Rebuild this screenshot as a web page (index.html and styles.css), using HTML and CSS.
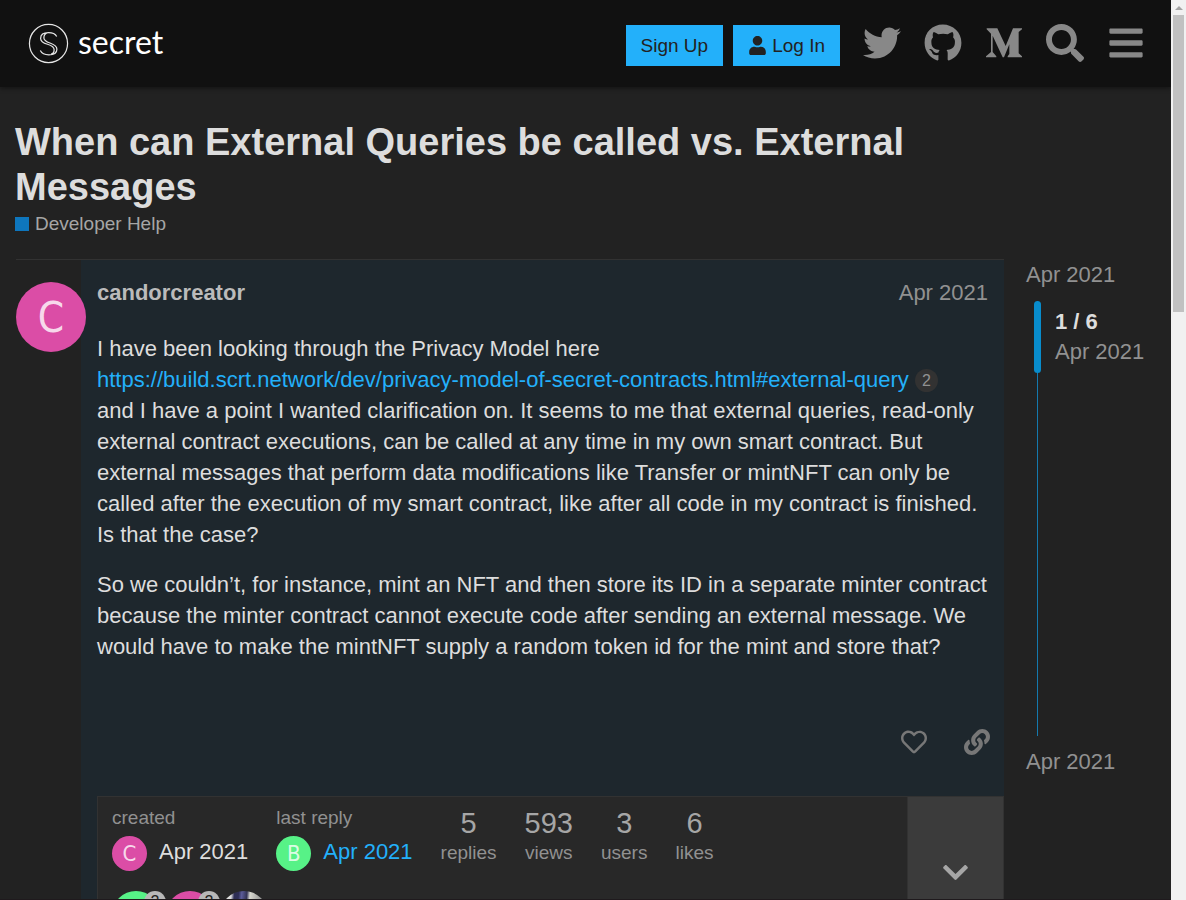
FILE: index.html
```html
<!DOCTYPE html>
<html lang="en">
<head>
<meta charset="utf-8">
<meta name="viewport" content="width=device-width, initial-scale=1">
<title>When can External Queries be called vs. External Messages</title>
<link rel="stylesheet" href="styles.css">
</head>
<body>
<div class="page">
  <header class="site-header">
    <a class="logo" href="#">
      <svg class="logo-mark" viewBox="0 0 40 40" aria-hidden="true">
        <circle cx="20" cy="20" r="18.6"/>
        <path d="M28 13.200C26.500 10.500 23.500 9.500 20 9.500C15.500 9.500 12.300 11.500 12.300 15C12.300 22 25.500 19.500 25.500 26C25.500 28.500 24 30 22.500 30.300M15.500 14.600C15.500 20.500 28.200 18.500 28.200 25.500C28.200 29.500 24.500 31 20.300 31C16.500 31 13.500 29.800 12 26.800M19 9.700C17 10.200 15.500 12.200 15.500 14.600"/>
      </svg>
      <span class="logo-text">secret</span>
    </a>
    <div class="auth">
      <button class="btn" type="button">Sign Up</button>
      <button class="btn" type="button">
        <svg class="btn-icon" viewBox="0 0 448 512" aria-hidden="true"><path d="M224 256c70.7 0 128-57.3 128-128S294.700 0 224 0 96 57.300 96 128s57.300 128 128 128zm89.600 32h-16.700c-22.200 10.200-46.900 16-72.900 16s-50.600-5.800-72.900-16h-16.700C60.200 288 0 348.200 0 422.400V464c0 26.500 21.500 48 48 48h352c26.500 0 48-21.500 48-48v-41.600c0-74.200-60.200-134.400-134.400-134.400z"/></svg>
        <span>Log In</span>
      </button>
    </div>
    <nav class="icons">
      <a href="#" aria-label="Twitter"><svg viewBox="0 0 512 512"><path d="M459.370 151.716c.325 4.548.325 9.097.325 13.645 0 138.720-105.583 298.558-298.558 298.558-59.452 0-114.680-17.219-161.137-47.106 8.447.974 16.568 1.299 25.340 1.299 49.055 0 94.213-16.568 130.274-44.832-46.132-.975-84.792-31.188-98.112-72.772 6.498.974 12.995 1.624 19.818 1.624 9.421 0 18.843-1.300 27.614-3.573-48.081-9.747-84.143-51.980-84.143-102.985v-1.299c13.969 7.797 30.214 12.670 47.431 13.319-28.264-18.843-46.781-51.005-46.781-87.391 0-19.492 5.197-37.360 14.294-52.954 51.655 63.675 129.300 105.258 216.365 109.807-1.624-7.797-2.599-15.918-2.599-24.040 0-57.828 46.782-104.934 104.934-104.934 30.213 0 57.502 12.670 76.670 33.137 23.715-4.548 46.456-13.320 66.599-25.340-7.798 24.366-24.366 44.833-46.132 57.827 21.117-2.273 41.584-8.122 60.426-16.243-14.292 20.791-32.161 39.308-52.628 54.253z"/></svg></a>
      <a href="#" aria-label="GitHub"><svg viewBox="0 0 496 512"><path d="M244.800 8C106.100 8 0 113.300 0 252c0 110.900 69.800 205.800 169.500 239.200 12.800 2.300 17.300-5.600 17.300-12.100 0-6.200-.3-40.400-.3-61.400 0 0-70 15-84.700-29.800 0 0-11.400-29.100-27.800-36.600 0 0-22.900-15.700 1.600-15.400 0 0 24.900 2 38.600 25.800 21.900 38.600 58.600 27.500 72.900 20.900 2.300-16 8.800-27.100 16-33.700-55.900-6.200-112.300-14.300-112.300-110.500 0-27.500 7.600-41.300 23.600-58.900-2.600-6.500-11.100-33.300 2.600-67.900 20.900-6.500 69 27 69 27 20-5.600 41.500-8.500 62.800-8.500s42.800 2.900 62.800 8.500c0 0 48.100-33.600 69-27 13.700 34.700 5.200 61.400 2.600 67.900 16 17.700 25.800 31.500 25.800 58.900 0 96.500-58.900 104.200-114.800 110.500 9.200 7.900 17 22.900 17 46.400 0 33.700-.3 75.400-.3 83.600 0 6.500 4.600 14.400 17.300 12.100C428.200 457.800 496 362.900 496 252 496 113.300 383.500 8 244.800 8z"/></svg></a>
      <a href="#" aria-label="Medium"><svg viewBox="-3 -13 114 114"><path d="M2 0H34L59 53 81 0H108V3L98 11V75L108 84V87H65V84L70 77V48L54 87H50L20 22V71L31 84V87H0V84L15 71V16L2 3Z"/></svg></a>
      <a href="#" aria-label="Search"><svg viewBox="0 0 512 512"><path d="M505 442.700L405.300 343c-4.500-4.500-10.600-7-17-7H372c27.600-35.300 44-79.700 44-128C416 93.100 322.900 0 208 0S0 93.100 0 208s93.100 208 208 208c48.300 0 92.700-16.400 128-44v16.300c0 6.400 2.500 12.500 7 17l99.700 99.700c9.400 9.400 24.600 9.400 33.900 0l28.300-28.300c9.400-9.400 9.400-24.600.1-34zM208 336c-70.700 0-128-57.200-128-128 0-70.700 57.200-128 128-128 70.700 0 128 57.200 128 128 0 70.700-57.200 128-128 128z"/></svg></a>
      <a href="#" aria-label="Menu"><svg viewBox="0 0 448 512"><path d="M16 132h416c8.837 0 16-7.163 16-16V76c0-8.837-7.163-16-16-16H16C7.163 60 0 67.163 0 76v40c0 8.837 7.163 16 16 16zm0 160h416c8.837 0 16-7.163 16-16v-40c0-8.837-7.163-16-16-16H16c-8.837 0-16 7.163-16 16v40c0 8.837 7.163 16 16 16zm0 160h416c8.837 0 16-7.163 16-16v-40c0-8.837-7.163-16-16-16H16c-8.837 0-16 7.163-16 16v40c0 8.837 7.163 16 16 16z"/></svg></a>
    </nav>
  </header>

  <div class="content">
    <div class="topic-title">
      <h1>When can External Queries be called vs. External Messages</h1>
      <a class="category" href="#"><span class="category-box"></span>Developer Help</a>
    </div>

    <div class="columns">
      <main class="post">
        <div class="post-side"><span class="avatar avatar-large pink">C</span></div>
        <article class="post-body">
          <div class="post-meta">
            <a class="username" href="#">candorcreator</a>
            <a class="post-date" href="#">Apr 2021</a>
          </div>
          <div class="cooked">
            <p>I have been looking through the Privacy Model here<br>
            <a href="#">https://build.scrt.network/dev/privacy-model-of-secret-contracts.html#external-query</a> <span class="clicks">2</span><br>
            and I have a point I wanted clarification on. It seems to me that external queries, read-only external contract executions, can be called at any time in my own smart contract. But external messages that perform data modifications like Transfer or mintNFT can only be called after the execution of my smart contract, like after all code in my contract is finished. Is that the case?</p>
            <p>So we couldn’t, for instance, mint an NFT and then store its ID in a separate minter contract because the minter contract cannot execute code after sending an external message. We would have to make the mintNFT supply a random token id for the mint and store that?</p>
          </div>
          <div class="post-controls">
            <button type="button" aria-label="Like"><svg viewBox="0 0 512 512"><path d="M458.400 64.300C400.600 15.700 311.300 23 256 79.300 200.700 23 111.400 15.600 53.600 64.300-21.600 127.600-10.600 230.800 43 285.500l175.400 178.700c10 10.200 23.400 15.900 37.600 15.900 14.300 0 27.600-5.600 37.600-15.800L469 285.600c53.500-54.700 64.700-157.900-10.600-221.300zm-23.600 187.500L259.400 430.500c-2.400 2.400-4.400 2.400-6.800 0L77.200 251.800c-36.500-37.200-43.900-107.600 7.300-150.700 38.900-32.700 98.900-27.800 136.500 10.500l35 35.700 35-35.700c37.800-38.500 97.800-43.200 136.500-10.600 51.100 43.100 43.500 113.900 7.300 150.800z"/></svg></button>
            <button type="button" aria-label="Copy link"><svg viewBox="0 0 512 512"><path d="M326.612 185.391c59.747 59.809 58.927 155.698.36 214.590-.11.12-.24.25-.36.37l-67.200 67.200c-59.270 59.270-155.699 59.262-214.960 0-59.270-59.260-59.270-155.700 0-214.960l37.106-37.106c9.840-9.840 26.786-3.300 27.294 10.606.648 17.722 3.826 35.527 9.690 52.721 1.986 5.822.567 12.262-3.783 16.612l-13.087 13.087c-28.026 28.026-28.905 73.660-1.155 101.960 28.024 28.579 74.086 28.749 102.325.51l67.200-67.190c28.191-28.191 28.073-73.757 0-101.830-3.701-3.694-7.429-6.564-10.341-8.569a16.037 16.037 0 0 1-6.947-12.606c-.396-10.567 3.348-21.456 11.698-29.806l21.054-21.055c5.521-5.521 14.182-6.199 20.584-1.731a152.482 152.482 0 0 1 20.522 17.197zM467.547 44.449c-59.261-59.262-155.690-59.270-214.960 0l-67.200 67.200c-.12.12-.25.25-.36.37-58.566 58.892-59.387 154.781.36 214.590a152.454 152.454 0 0 0 20.521 17.196c6.402 4.468 15.064 3.789 20.584-1.731l21.054-21.055c8.350-8.350 12.094-19.239 11.698-29.806a16.037 16.037 0 0 0-6.947-12.606c-2.912-2.005-6.640-4.875-10.341-8.569-28.073-28.073-28.191-73.639 0-101.830l67.200-67.190c28.239-28.239 74.300-28.069 102.325.51 27.750 28.300 26.872 73.934-1.155 101.960l-13.087 13.087c-4.350 4.350-5.769 10.790-3.783 16.612 5.864 17.194 9.042 34.999 9.690 52.721.509 13.906 17.454 20.446 27.294 10.606l37.106-37.106c59.271-59.259 59.271-155.699.001-214.959z"/></svg></button>
          </div>
          <section class="topic-map">
            <div class="map-main">
              <ul class="stats">
                <li><span class="label">created</span>
                  <span class="stat-user"><span class="avatar avatar-small pink">C</span>Apr 2021</span></li>
                <li><span class="label">last reply</span>
                  <a class="stat-user" href="#"><span class="avatar avatar-small green">B</span>Apr 2021</a></li>
                <li class="count"><span class="number">5</span><span class="label">replies</span></li>
                <li class="count"><span class="number">593</span><span class="label">views</span></li>
                <li class="count"><span class="number">3</span><span class="label">users</span></li>
                <li class="count"><span class="number">6</span><span class="label">likes</span></li>
              </ul>
              <div class="posters">
                <a class="poster" href="#"><span class="avatar avatar-medium green">B</span><span class="post-count">2</span></a>
                <a class="poster" href="#"><span class="avatar avatar-medium pink">C</span><span class="post-count">2</span></a>
                <a class="poster" href="#" aria-label="Poster"><span class="avatar avatar-medium photo"></span></a>
              </div>
            </div>
            <button class="map-toggle" type="button" aria-label="Expand topic details"><svg viewBox="0 0 448 512"><path d="M207.029 381.476L12.686 187.132c-9.373-9.373-9.373-24.569 0-33.941l22.667-22.667c9.357-9.357 24.522-9.375 33.901-.04L224 284.505l154.745-154.021c9.379-9.335 24.544-9.317 33.901.04l22.667 22.667c9.373 9.373 9.373 24.569 0 33.941L240.971 381.476c-9.373 9.372-24.569 9.372-33.942 0z"/></svg></button>
          </section>
        </article>
      </main>

      <aside class="timeline">
        <a class="timeline-date" href="#">Apr 2021</a>
        <div class="track">
          <div class="handle"></div>
          <div class="position"><strong>1 / 6</strong><span>Apr 2021</span></div>
        </div>
        <a class="timeline-date" href="#">Apr 2021</a>
      </aside>
    </div>
  </div>
</div>
<div class="scrollbar" aria-hidden="true"><span class="scroll-arrow"></span><span class="scroll-thumb"></span></div>
</body>
</html>
```

FILE: styles.css
```css
* { box-sizing: border-box; }

body {
  margin: 0;
  height: 100vh;
  display: flex;
  overflow: hidden;
  background: #222;
  color: #ddd;
  font-family: "Liberation Sans", Arial, sans-serif;
  font-size: 22px;
  line-height: 31px;
}

a { color: inherit; text-decoration: none; }
button { border: 0; padding: 0; background: none; color: inherit; font: inherit; cursor: pointer; }
svg { display: block; fill: currentColor; }
h1, p, ul { margin: 0; padding: 0; }

.page {
  flex: 1;
  min-width: 0;
  height: 100vh;
  overflow: hidden;
  border-bottom: 1px solid #1f1a1d;
}

/* Header */
.site-header {
  display: flex;
  align-items: center;
  height: 87px;
  padding: 0 15px 0 28px;
  background: #111;
  box-shadow: 0 2px 4px rgba(0, 0, 0, .35);
}
.logo { display: flex; align-items: center; gap: 9px; margin-right: auto; color: #fff; }
.logo-mark { width: 41px; height: 41px; fill: none; stroke: #e6e6e6; stroke-width: 1.2; }
.logo-text { font-family: Lato, sans-serif; font-size: 32px; line-height: 40px; padding-bottom: 4px; }
.auth { display: flex; gap: 10px; margin-right: 11px; padding-top: 4px; }
.btn {
  display: flex;
  align-items: center;
  gap: 5px;
  height: 41px;
  padding: 0 15px;
  background: #23b0fa;
  color: #222;
  font-size: 19px;
}
.btn-icon { width: 19px; height: 19px; }
.icons { display: flex; padding-bottom: 2px; color: #888; }
.icons a { width: 61px; display: flex; justify-content: center; }
.icons svg { height: 38px; width: 38px; }

/* Topic title */
.content { padding: 33px 15px 0; }
.topic-title { padding: 0 152px 22px 0; }
h1 { font-size: 38px; line-height: 45px; color: #ddd; }
.category { display: flex; align-items: center; gap: 6px; font-size: 19px; line-height: 27px; color: #a6a6a6; }
.category-box { width: 14px; height: 14px; background: #0e76bd; }

.columns { display: flex; align-items: flex-start; gap: 22px; }

/* Post */
.post { flex: 1; min-width: 0; display: flex; margin-left: 1px; border-top: 1px solid #323232; }
.post-side { width: 65px; padding-top: 22px; z-index: 1; }
.post-body { flex: 1; min-width: 0; padding: 17px 0 0 16px; background: #1e272d; }
.post-meta { display: flex; justify-content: space-between; padding-right: 16px; }
.username { font-weight: bold; color: #bbb; }
.post-date { color: #919191; }
.cooked { padding: 25px 8px 0 0; }
.cooked p + p { margin-top: 19px; }
.cooked a { color: #23b0fa; }
.clicks {
  display: inline-block;
  min-width: 23px;
  border-radius: 12px;
  background: #323232;
  color: #919191;
  font-size: 16px;
  line-height: 23px;
  text-align: center;
  vertical-align: 1px;
}
.post-controls { display: flex; justify-content: flex-end; gap: 37px; padding: 67px 14px 41px 0; color: #777; }
.post-controls svg { width: 26px; height: 26px; }

.avatar {
  display: flex;
  align-items: center;
  justify-content: center;
  flex: none;
  border-radius: 50%;
  font-family: "DejaVu Sans Condensed", "DejaVu Sans", sans-serif;
  color: rgba(255, 255, 255, .8);
}
.avatar-large { width: 70px; height: 70px; font-size: 42px; }
.avatar-small { width: 35px; height: 35px; font-size: 22px; }
.avatar-medium { width: 48px; height: 48px; font-size: 28px; }
.pink { background: #db4da6; }
.green { background: #57f287; }
.photo { background: linear-gradient(95deg, #ddd 0 22%, #2e2e55 28% 36%, #5c5c99 42%, #333355 52%, #d8d8d0 58%, #888 85%); }

/* Topic map */
.topic-map { display: flex; background: #282828; border: 1px solid #323232; }
.map-main { flex: 1; padding: 8px 14px; }
.stats { display: flex; gap: 28px; list-style: none; }
.label { display: block; font-size: 19px; line-height: 26px; color: #919191; }
.stat-user { display: flex; align-items: flex-start; gap: 12px; padding-top: 5px; }
a.stat-user { color: #23b0fa; }
.count { text-align: center; }
.number { display: block; padding-top: 2px; font-size: 29px; line-height: 33px; color: #a6a6a6; }
.posters { display: flex; gap: 6px; padding: 20px 0 16px; }
.poster { position: relative; }
.post-count {
  position: absolute;
  top: 0;
  right: -6px;
  width: 22px;
  height: 22px;
  border-radius: 50%;
  background: #b8b8b8;
  color: #222;
  font-size: 16px;
  line-height: 22px;
  text-align: center;
}
.map-toggle {
  width: 96px;
  padding-top: 61px;
  display: flex;
  align-items: flex-start;
  justify-content: center;
  background: #3b3b3b;
  border-left: 1px solid #323232;
  color: #a6a6a6;
}
.map-toggle svg { width: 29px; height: 29px; }

/* Timeline */
.timeline { width: 130px; color: #919191; }
.timeline-date { display: block; }
.track { position: relative; height: 435px; margin: 11px 0 10px 11px; border-left: 1px solid #1479ae; padding: 6px 0 0 17px; }
.handle { position: absolute; top: 0; left: -4px; width: 7px; height: 72px; border-radius: 4px; background: #088ccc; }
.position strong, .position span { display: block; line-height: 30px; }
.position strong { color: #ddd; }

/* Scrollbar */
.scrollbar { width: 15px; padding: 6px 2px 0; background: #f1f1f1; display: flex; flex-direction: column; align-items: center; gap: 5px; }
.scroll-arrow { border: 4px solid transparent; border-top-width: 0; border-bottom-color: #a3a3a3; }
.scroll-thumb { width: 11px; height: 33vh; background: #c1c1c1; }
```
